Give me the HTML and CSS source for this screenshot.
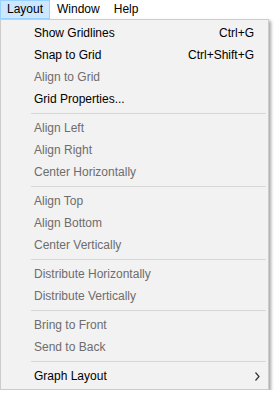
FILE: index.html
```
<!DOCTYPE html>
<html lang="en">
<head>
    <meta charset="UTF-8">
    <meta name="viewport" content="width=device-width, initial-scale=1.0">
    <title>Layout menu</title>
    <link rel="stylesheet" href="styles.css">
</head>
<body>
    <div class="menubar">
        <span class="top-item active">Layout</span>
        <span class="top-item">Window</span>
        <span class="top-item">Help</span>
    </div>

    <div class="menu">
        <div class="item"><span class="label">Show Gridlines</span><span class="key">Ctrl+G</span></div>
        <div class="item"><span class="label">Snap to Grid</span><span class="key">Ctrl+Shift+G</span></div>
        <div class="item disabled"><span class="label">Align to Grid</span></div>
        <div class="item"><span class="label">Grid Properties...</span></div>
        <div class="sep"></div>
        <div class="item disabled"><span class="label">Align Left</span></div>
        <div class="item disabled"><span class="label">Align Right</span></div>
        <div class="item disabled"><span class="label">Center Horizontally</span></div>
        <div class="sep"></div>
        <div class="item disabled"><span class="label">Align Top</span></div>
        <div class="item disabled"><span class="label">Align Bottom</span></div>
        <div class="item disabled"><span class="label">Center Vertically</span></div>
        <div class="sep"></div>
        <div class="item disabled"><span class="label">Distribute Horizontally</span></div>
        <div class="item disabled"><span class="label">Distribute Vertically</span></div>
        <div class="sep"></div>
        <div class="item disabled"><span class="label">Bring to Front</span></div>
        <div class="item disabled"><span class="label">Send to Back</span></div>
        <div class="sep"></div>
        <div class="item">
            <span class="label">Graph Layout</span>
            <svg class="arrow" width="5" height="9" viewBox="0 0 5 9">
                <path d="M0.5 0.5 L4 4.5 L0.5 8.5" fill="none" stroke="#333" stroke-width="1.2"/>
            </svg>
        </div>
    </div>
</body>
</html>
```

FILE: styles.css
```
body {
    margin: 0;
    background: #ffffff;
    font-family: "Liberation Sans", Arial, sans-serif;
    font-size: 12px;
    color: #000;
}
.menubar {
    display: flex;
    height: 19px;
    background: #ffffff;
}
.top-item {
    padding: 0 6px;
    border: 1px solid transparent;
    box-sizing: border-box;
    height: 19px;
    line-height: 17px;
}
.top-item.active {
    background: #cce8ff;
    border-color: #99d1ff;
}
.menu {
    width: 269px;
    box-sizing: border-box;
    background: #f2f2f2;
    border: 1px solid #cccccc;
    padding: 2px;
    box-shadow: 2px 2px 3px rgba(0, 0, 0, 0.35);
}
.item {
    display: flex;
    align-items: center;
    height: 22px;
    padding: 0 12px 0 31px;
}
.item .label {
    flex: 1;
}
.item.disabled {
    color: #6d6d6d;
}
.key {
    text-align: right;
}
.arrow {
    margin-right: -6px;
}
.sep {
    height: 7px;
    margin-left: 28px;
    position: relative;
}
.sep::after {
    content: "";
    display: block;
    position: relative;
    top: 3px;
    height: 1px;
    background: #d7d7d7;
}
```
